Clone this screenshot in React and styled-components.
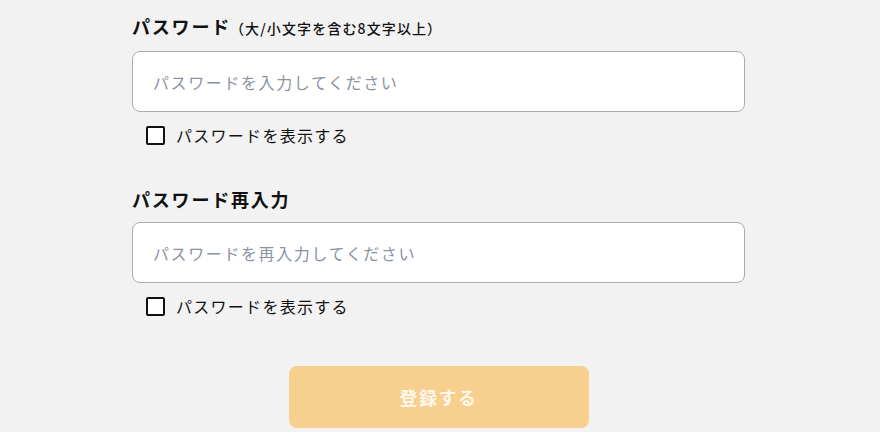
import React from "react";
import styled, { createGlobalStyle } from "styled-components";

const Global = createGlobalStyle`
  html, body { margin: 0; padding: 0; background: #f2f2f2; }
  body { font-family: "Noto Sans CJK JP", "Noto Sans", sans-serif; color: #111; letter-spacing: 0.08em; }
  * { box-sizing: border-box; }
`;

const Page = styled.div`
  width: 880px;
  height: 432px;
  overflow: hidden;
  background: #f2f2f2;
  padding: 13px 0 0 132px;
`;

const Form = styled.form`
  width: 613px;
  display: flex;
  flex-direction: column;
`;

const Field = styled.div`
  display: flex;
  flex-direction: column;
  margin-bottom: ${(p) => p.$mb || 0}px;
`;

const Label = styled.label`
  font-size: 18px;
  font-weight: 700;
  line-height: 27px;
  margin-bottom: 9px;
  color: #111;
  letter-spacing: 0.1em;
`;

const Note = styled.span`
  font-size: 14px;
  font-weight: 500;
  margin-left: -1px;
  letter-spacing: 0.08em;
`;

const Input = styled.input`
  height: 61px;
  width: 100%;
  border: 1px solid #acacac;
  border-radius: 8px;
  background: #fff;
  padding: 0 20px;
  font-family: inherit;
  font-size: 16px;
  letter-spacing: 0.1em;
  color: #111;
  outline: none;
  &::placeholder { color: #8b93a1; }
`;

const CheckRow = styled.label`
  display: flex;
  align-items: center;
  gap: 11px;
  margin: 11px 0 0 14px;
  font-size: 16px;
  line-height: 24px;
  cursor: pointer;
`;

const Box = styled.span`
  width: 19px;
  height: 19px;
  border: 2px solid #111;
  border-radius: 2px;
  background: #fff;
`;

const HiddenCheck = styled.input`
  display: none;
`;

const Submit = styled.button`
  align-self: center;
  width: 300px;
  height: 62px;
  margin-top: 48px;
  border: none;
  border-radius: 8px;
  background: #f7cf8f;
  color: #fdf7ec;
  font-family: inherit;
  font-size: 18px;
  font-weight: 700;
  letter-spacing: 0.08em;
`;

function PasswordField({ label, note, placeholder, mb }) {
  return (
    <Field $mb={mb}>
      <Label>
        {label}
        {note && <Note>{note}</Note>}
      </Label>
      <Input type="password" placeholder={placeholder} />
      <CheckRow>
        <HiddenCheck type="checkbox" />
        <Box />
        パスワードを表示する
      </CheckRow>
    </Field>
  );
}

export default function App() {
  return (
    <>
      <Global />
      <Page>
        <Form onSubmit={(e) => e.preventDefault()}>
          <PasswordField
            label="パスワード"
            note="（大/小文字を含む8文字以上）"
            placeholder="パスワードを入力してください"
            mb={39}
          />
          <PasswordField label="パスワード再入力" placeholder="パスワードを再入力してください" />
          <Submit type="submit" disabled>登録する</Submit>
        </Form>
      </Page>
    </>
  );
}
